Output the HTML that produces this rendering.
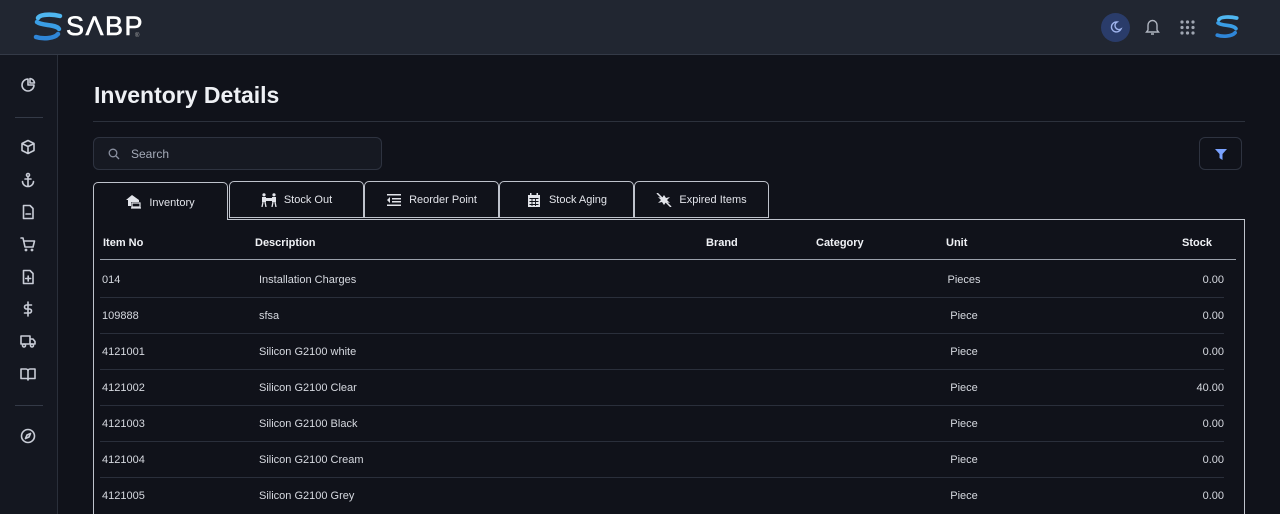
<!DOCTYPE html>
<html><head><meta charset="utf-8"><style>
*{box-sizing:border-box;margin:0;padding:0}
html{width:1280px;height:514px;overflow:hidden}
body{width:1280px;height:514px;overflow:hidden;background:#10121a;font-family:"Liberation Sans",sans-serif;color:#e6e8ee;position:relative}
.hdr{position:absolute;left:0;top:0;width:1280px;height:55px;background:#212631;border-bottom:1px solid #343a47}
.side{position:absolute;left:0;top:55px;width:58px;height:459px;background:#141720;border-right:1px solid #2a2f3a}
.ic{position:absolute;left:20px;width:18px;height:18px}
.ic svg{width:16px;height:16px;stroke:#c8ccd6;fill:none;stroke-width:1.6;stroke-linecap:round;stroke-linejoin:round}
.sep{position:absolute;left:15px;width:28px;height:1px;background:#343a47}
h1{position:absolute;left:94px;top:82px;font-size:23px;font-weight:700;color:#eef0f4}
.hl{position:absolute;left:93px;top:121px;width:1152px;height:1px;background:#2c313c}
.search{position:absolute;left:93px;top:137px;width:289px;height:33px;border:1px solid #2e3340;border-radius:6px;background:#161922}
.search span{position:absolute;left:37px;top:9px;font-size:12px;color:#a4aab8}
.filter{position:absolute;left:1199px;top:137px;width:43px;height:33px;border:1px solid #2e3340;border-radius:6px}
.tab{position:absolute;top:181px;width:135px;height:37px;border:1px solid #bfc3cc;border-bottom:none;border-radius:5px 5px 0 0;font-size:11px;color:#e2e4ea;display:flex;align-items:center;justify-content:center;gap:7px;background:#10121a}
.tab svg{width:16px;height:14px;fill:#e2e4ea}
.box{position:absolute;left:93px;top:219px;width:1152px;height:300px;border:1px solid #bfc3cc;border-bottom:none}
.th{position:absolute;top:237px;font-size:11px;font-weight:700;color:#f0f2f6}
.hline{position:absolute;left:100px;top:259px;width:1136px;height:1px;background:#9aa0ab}
.row{position:absolute;left:100px;width:1124px;height:1px;background:#2a2f3b}
.td{position:absolute;font-size:11px;color:#d6d9e0}
</style></head><body>
<div class="hdr">
<svg style="position:absolute;left:32px;top:12px" width="32" height="30" viewBox="0 0 32 30"><g fill="none" stroke-linecap="round" stroke-width="4.5"><path d="M28 4 C20 2 8 2 6 6" stroke="#4fb6f0"/><path d="M5 10 C10 14 24 12 27 17" stroke="#3a9ee6"/><path d="M26 22 C22 27 10 27 4 25" stroke="#2f86d8"/></g></svg>
<div style="position:absolute;left:66px;top:11px;font-size:27px;font-weight:400;color:#fff;letter-spacing:1.5px;-webkit-text-stroke:.6px #fff">SΛBP</div>
<div style="position:absolute;left:135px;top:33px;font-size:6px;color:#aaa">®</div>
<div style="position:absolute;left:1101px;top:13px;width:29px;height:29px;border-radius:50%;background:#2a3c6a"></div>
<svg style="position:absolute;left:1109px;top:20px" width="14" height="14" viewBox="0 0 14 14"><path d="M8 2 A5 5 0 1 0 12 9 A4 4 0 0 1 8 2Z" fill="none" stroke="#9fb4ee" stroke-width="1.4"/></svg>
<svg style="position:absolute;left:1144px;top:18px" width="17" height="18" viewBox="0 0 17 18"><path d="M4 12 V7 a4.5 4.5 0 0 1 9 0 V12 L14.5 14 H2.5Z M7 16 h3" fill="none" stroke="#b0b5c0" stroke-width="1.4"/></svg>
<svg style="position:absolute;left:1180px;top:20px" width="15" height="15" viewBox="0 0 15 15" fill="#a0a6b2"><circle cx="2" cy="2" r="1.6"/><circle cx="7.5" cy="2" r="1.6"/><circle cx="13" cy="2" r="1.6"/><circle cx="2" cy="7.5" r="1.6"/><circle cx="7.5" cy="7.5" r="1.6"/><circle cx="13" cy="7.5" r="1.6"/><circle cx="2" cy="13" r="1.6"/><circle cx="7.5" cy="13" r="1.6"/><circle cx="13" cy="13" r="1.6"/></svg>
<svg style="position:absolute;left:1214px;top:14px" width="26" height="26" viewBox="0 0 32 30"><g fill="none" stroke-linecap="round" stroke-width="4.5"><path d="M28 4 C20 2 8 2 6 6" stroke="#4fb6f0"/><path d="M5 10 C10 14 24 12 27 17" stroke="#3a9ee6"/><path d="M26 22 C22 27 10 27 4 25" stroke="#2f86d8"/></g></svg>
</div>
<div class="side">
<div class="ic" style="top:22px"><svg viewBox="0 0 16 16"><path d="M8 2 A6 6 0 1 0 14 8 H8Z M10 1.5 A5 5 0 0 1 14.5 6 H10Z"/></svg></div>
<div class="sep" style="top:62px"></div>
<div class="ic" style="top:84px"><svg viewBox="0 0 16 16"><path d="M8 1.5 L14 4.5 V11.5 L8 14.5 L2 11.5 V4.5Z M2 4.5 L8 7.5 L14 4.5 M8 7.5 V14.5"/></svg></div>
<div class="ic" style="top:117px"><svg viewBox="0 0 16 16"><circle cx="8" cy="3" r="1.5"/><path d="M8 4.5 V14 M5 7 H11 M2.5 9.5 A5.5 5 0 0 0 13.5 9.5"/></svg></div>
<div class="ic" style="top:149px"><svg viewBox="0 0 16 16"><path d="M3.5 1.5 H10 L13 4.5 V14.5 H3.5Z M6 10 H10.5"/></svg></div>
<div class="ic" style="top:181px"><svg viewBox="0 0 16 16"><path d="M1 2 H3 L5 11 H13 L14.5 5 H4"/><circle cx="6" cy="14" r=".6"/><circle cx="12" cy="14" r=".6"/></svg></div>
<div class="ic" style="top:214px"><svg viewBox="0 0 16 16"><path d="M3.5 1.5 H10 L13 4.5 V14.5 H3.5Z M8.2 7 V12 M5.7 9.5 H10.7"/></svg></div>
<div class="ic" style="top:246px"><svg viewBox="0 0 16 16"><path d="M8 1 V15 M11.5 4 H6.5 a2 2 0 0 0 0 4 h3 a2 2 0 0 1 0 4 H4.5"/></svg></div>
<div class="ic" style="top:278px"><svg viewBox="0 0 16 16"><path d="M1 3 H10 V11 H1Z M10 6 H13 L15 8.5 V11 H10"/><circle cx="4" cy="12.5" r="1.5"/><circle cx="12" cy="12.5" r="1.5"/></svg></div>
<div class="ic" style="top:311px"><svg viewBox="0 0 16 16"><path d="M1 3 H6 a2 2 0 0 1 2 2 V14 a1.5 1.5 0 0 0 -1.5 -1.5 H1Z M15 3 H10 a2 2 0 0 0 -2 2 V14 a1.5 1.5 0 0 1 1.5 -1.5 H15Z"/></svg></div>
<div class="sep" style="top:350px"></div>
<div class="ic" style="top:373px"><svg viewBox="0 0 16 16"><circle cx="8" cy="8" r="6.5"/><path d="M10.5 5.5 L9 9 L5.5 10.5 L7 7Z"/></svg></div>
</div>
<h1>Inventory Details</h1>
<div class="hl"></div>
<div class="search"><svg style="position:absolute;left:14px;top:10px" width="12" height="12" viewBox="0 0 12 12"><circle cx="5" cy="5" r="3.8" fill="none" stroke="#8a90a0" stroke-width="1.3"/><path d="M8 8 L11 11" stroke="#8a90a0" stroke-width="1.3"/></svg><span>Search</span></div>
<div class="filter"><svg style="position:absolute;left:15px;top:11px" width="12" height="11" viewBox="0 0 12 11"><path d="M0 0 H12 L7.5 5 V11 L4.5 9 V5Z" fill="#7aa2ff"/></svg></div>
<div class="box"></div>
<div class="tab" style="left:93px;top:182px;height:38px;border-bottom:none"><svg viewBox="0 0 16 14"><path d="M6 0 L0 5 H2 V11 H5 V7 H13 V5Z"/><path d="M6 8 H14 V12 H6Z M5 13 H15" fill="none" stroke="#e2e4ea" stroke-width="1.2"/></svg><span style="margin-top:2px">Inventory</span></div>
<div class="tab" style="left:229px;border-bottom:1px solid #bfc3cc"><svg viewBox="0 0 16 14"><circle cx="3" cy="1.8" r="1.6"/><circle cx="13" cy="1.8" r="1.6"/><path d="M1 4 H5 V9 H1Z M11 4 H15 V9 H11Z M5 5 H11 V8 H5Z"/><path d="M2 9 L1 14 M4 9 L5 14 M12 9 L11 14 M14 9 L15 14" stroke="#e2e4ea" stroke-width="1.3"/></svg>Stock Out</div>
<div class="tab" style="left:364px;border-bottom:1px solid #bfc3cc"><svg viewBox="0 0 16 14"><path d="M1 1 H15 V2.5 H1Z M6 5 H15 V6.5 H6Z M6 8 H15 V9.5 H6Z M1 11.5 H15 V13 H1Z M4 4 L1 7 L4 10Z"/></svg>Reorder Point</div>
<div class="tab" style="left:499px;border-bottom:1px solid #bfc3cc"><svg viewBox="0 0 16 14"><path d="M2 2 H14 V14 H2Z M4 0 H5.5 V3 H4Z M10.5 0 H12 V3 H10.5Z" /><path d="M3.5 5.5 H12.5 M3.5 8.5 H12.5 M3.5 11.5 H12.5 M6 5 V13 M9.5 5 V13" stroke="#10121a" stroke-width=".9"/></svg>Stock Aging</div>
<div class="tab" style="left:634px;border-bottom:1px solid #bfc3cc"><svg viewBox="0 0 16 14"><path d="M8 2 L10 5 L14 4 L11 7 L14 10 L10 9 L8 12 L6 9 L2 10 L5 7 L2 4 L6 5Z"/><path d="M1 0 L15 14" stroke="#e2e4ea" stroke-width="1.5"/></svg>Expired Items</div>
<div class="th" style="left:103px">Item No</div>
<div class="th" style="left:255px">Description</div>
<div class="th" style="left:706px">Brand</div>
<div class="th" style="left:816px">Category</div>
<div class="th" style="left:946px">Unit</div>
<div class="th" style="left:1150px;width:62px;text-align:right">Stock</div>
<div class="hline"></div>

<div class="td" style="left:102px;top:274px">014</div><div class="td" style="left:259px;top:274px">Installation Charges</div><div class="td" style="left:930px;width:68px;text-align:center;top:274px">Pieces</div><div class="td" style="left:1150px;width:74px;text-align:right;top:274px">0.00</div><div class="row" style="top:297px"></div>
<div class="td" style="left:102px;top:310px">109888</div><div class="td" style="left:259px;top:310px">sfsa</div><div class="td" style="left:930px;width:68px;text-align:center;top:310px">Piece</div><div class="td" style="left:1150px;width:74px;text-align:right;top:310px">0.00</div><div class="row" style="top:333px"></div>
<div class="td" style="left:102px;top:346px">4121001</div><div class="td" style="left:259px;top:346px">Silicon G2100 white</div><div class="td" style="left:930px;width:68px;text-align:center;top:346px">Piece</div><div class="td" style="left:1150px;width:74px;text-align:right;top:346px">0.00</div><div class="row" style="top:369px"></div>
<div class="td" style="left:102px;top:382px">4121002</div><div class="td" style="left:259px;top:382px">Silicon G2100 Clear</div><div class="td" style="left:930px;width:68px;text-align:center;top:382px">Piece</div><div class="td" style="left:1150px;width:74px;text-align:right;top:382px">40.00</div><div class="row" style="top:405px"></div>
<div class="td" style="left:102px;top:418px">4121003</div><div class="td" style="left:259px;top:418px">Silicon G2100 Black</div><div class="td" style="left:930px;width:68px;text-align:center;top:418px">Piece</div><div class="td" style="left:1150px;width:74px;text-align:right;top:418px">0.00</div><div class="row" style="top:441px"></div>
<div class="td" style="left:102px;top:454px">4121004</div><div class="td" style="left:259px;top:454px">Silicon G2100 Cream</div><div class="td" style="left:930px;width:68px;text-align:center;top:454px">Piece</div><div class="td" style="left:1150px;width:74px;text-align:right;top:454px">0.00</div><div class="row" style="top:477px"></div>
<div class="td" style="left:102px;top:490px">4121005</div><div class="td" style="left:259px;top:490px">Silicon G2100 Grey</div><div class="td" style="left:930px;width:68px;text-align:center;top:490px">Piece</div><div class="td" style="left:1150px;width:74px;text-align:right;top:490px">0.00</div>
</body></html>
